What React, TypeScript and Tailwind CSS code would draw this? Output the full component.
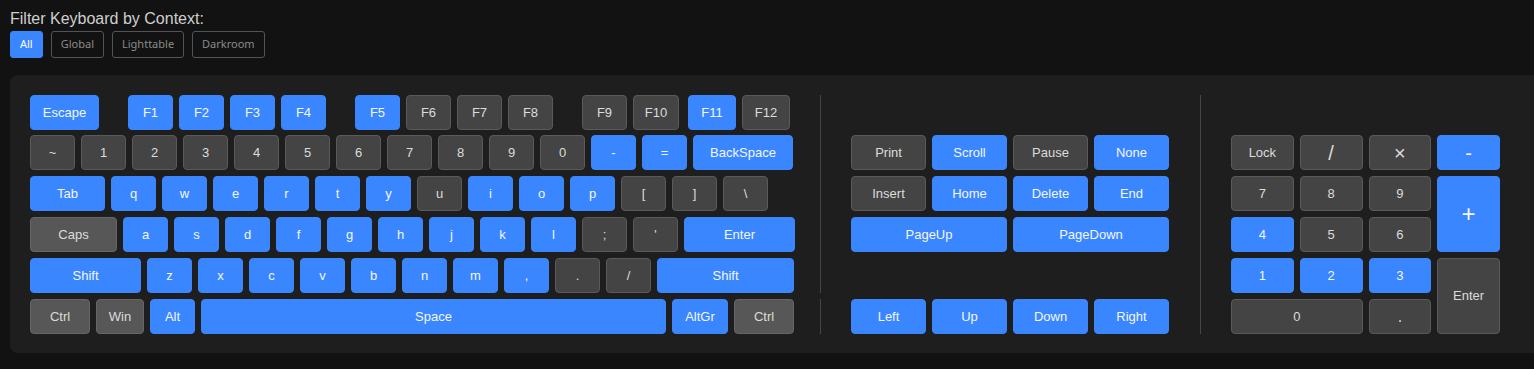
import React from "react";

type K = { l: string; w?: string; on?: boolean; mod?: boolean; c?: string };

const row1: K[] = [
  { l: "Escape", w: "w-[69px]", on: true },
  { l: "F1", on: true, c: "ml-[23px]" },
  { l: "F2", on: true },
  { l: "F3", on: true },
  { l: "F4", on: true },
  { l: "F5", on: true, c: "ml-[23px]" },
  { l: "F6" },
  { l: "F7" },
  { l: "F8" },
  { l: "F9", c: "ml-[23px]" },
  { l: "F10", w: "w-[46px]" },
  { l: "F11", w: "w-[48px]", on: true, c: "ml-[3px]" },
  { l: "F12", w: "w-[48px]" },
];

const row2: K[] = [
  ..."~1234567890".split("").map((l) => ({ l })),
  { l: "-", on: true },
  { l: "=", on: true },
  { l: "BackSpace", w: "w-[100px]", on: true },
];

const row3: K[] = [
  { l: "Tab", w: "w-[75px]", on: true },
  ..."qwerty".split("").map((l) => ({ l, on: true })),
  { l: "u" },
  ..."iop".split("").map((l) => ({ l, on: true })),
  { l: "[" },
  { l: "]" },
  { l: "\\" },
];

const row4: K[] = [
  { l: "Caps", w: "w-[87px]", mod: true },
  ..."asdfghjkl".split("").map((l) => ({ l, on: true })),
  { l: ";" },
  { l: "'" },
  { l: "Enter", w: "w-[111px]", on: true },
];

const row5: K[] = [
  { l: "Shift", w: "w-[111px]", on: true },
  ..."zxcvbnm,".split("").map((l) => ({ l, on: true })),
  { l: "." },
  { l: "/" },
  { l: "Shift", w: "w-[137px]", on: true },
];

const row6: K[] = [
  { l: "Ctrl", w: "w-[60px]", mod: true },
  { l: "Win", w: "w-[48px]", mod: true },
  { l: "Alt", on: true },
  { l: "Space", w: "w-[465px]", on: true },
  { l: "AltGr", w: "w-[56px]", on: true },
  { l: "Ctrl", w: "w-[60px]", mod: true },
];

function keyTone(k: { on?: boolean; mod?: boolean }) {
  if (k.on) return "bg-[#3a86ff] border-[#3a86ff] text-[#f4f7ff]";
  if (k.mod) return "bg-[#575757] border-[#666666] text-[#dcdcdc]";
  return "bg-[#444444] border-[#5a5a5a] text-[#dcdcdc]";
}

function Key({ k }: { k: K }) {
  return (
    <div
      className={`h-[35px] ${k.w ?? "w-[45px]"} ${k.c ?? ""} shrink-0 rounded-[4px] border flex items-center justify-center text-[13px] ${keyTone(k)}`}
    >
      {k.l}
    </div>
  );
}

function Row({ keys, className = "" }: { keys: K[]; className?: string }) {
  return (
    <div className={`flex gap-[6px] ${className}`}>
      {keys.map((k, i) => (
        <Key key={i} k={k} />
      ))}
    </div>
  );
}

function Cell({ label, on, span = "", size = "text-[13px]" }: { label: string; on?: boolean; span?: string; size?: string }) {
  return (
    <div className={`rounded-[4px] border flex items-center justify-center ${size} ${span} ${keyTone({ on })}`}>
      {label}
    </div>
  );
}

export default function App() {
  const filters = ["All", "Global", "Lighttable", "Darkroom"];

  return (
    <div className="min-h-screen bg-[#121212] pl-[10px] pt-[10px] font-['Liberation_Sans',Arial,sans-serif] overflow-hidden">
      <div className="text-[16px] leading-[18px] text-[#cfcfcf]">Filter Keyboard by Context:</div>
      <div className="flex gap-2 mt-[3px]">
        {filters.map((f, i) => (
          <button
            key={f}
            className={`h-[27px] px-[9px] rounded-[3px] border text-[11px] font-['Noto_Sans',sans-serif] ${
              i === 0 ? "bg-[#3a86ff] border-[#3a86ff] text-white" : "border-[#50555a] text-[#8a8a8a]"
            }`}
          >
            {f}
          </button>
        ))}
      </div>

      <div className="mt-[17px] bg-[#1e1e1e] rounded-l-[8px] pl-[20px] pt-[20px] pb-[19px] flex items-start">
        {/* main block */}
        <div className="flex flex-col gap-[6px] w-[765px] shrink-0">
          <Row keys={row1} className="mb-[-1px]" />
          <Row keys={row2} />
          <Row keys={row3} />
          <Row keys={row4} />
          <Row keys={row5} />
          <Row keys={row6} />
        </div>

        {/* divider, broken before the bottom row */}
        <div className="ml-[25px] flex flex-col gap-[6px] shrink-0">
          <div className="w-px h-[198px] bg-[#464646]" />
          <div className="w-px h-[35px] bg-[#464646]" />
        </div>

        {/* navigation cluster */}
        <div className="ml-[30px] pt-[40px] w-[318px] shrink-0 grid grid-cols-4 auto-rows-[35px] gap-[6px]">
          <Cell label="Print" />
          <Cell label="Scroll" on />
          <Cell label="Pause" />
          <Cell label="None" on />
          <Cell label="Insert" />
          <Cell label="Home" on />
          <Cell label="Delete" on />
          <Cell label="End" on />
          <Cell label="PageUp" on span="col-span-2" />
          <Cell label="PageDown" on span="col-span-2" />
          <div className="col-span-4" />
          <Cell label="Left" on />
          <Cell label="Up" on />
          <Cell label="Down" on />
          <Cell label="Right" on />
        </div>

        <div className="ml-[31px] w-px h-[239px] bg-[#464646] shrink-0" />

        {/* numpad */}
        <div className="ml-[30px] pt-[40px] w-[269px] shrink-0 grid grid-cols-4 grid-rows-[repeat(5,35px)] gap-[6px]">
          <Cell label="Lock" />
          <Cell label="/" size="text-[20px]" />
          <Cell label="×" size="text-[20px]" />
          <Cell label="-" on size="text-[20px]" />
          <Cell label="7" />
          <Cell label="8" />
          <Cell label="9" />
          <Cell label="+" on span="row-span-2" size="text-[24px]" />
          <Cell label="4" on />
          <Cell label="5" />
          <Cell label="6" />
          <Cell label="1" on />
          <Cell label="2" on />
          <Cell label="3" on />
          <Cell label="Enter" span="row-span-2" />
          <Cell label="0" span="col-span-2" />
          <Cell label="." size="text-[16px]" />
        </div>
      </div>
    </div>
  );
}
